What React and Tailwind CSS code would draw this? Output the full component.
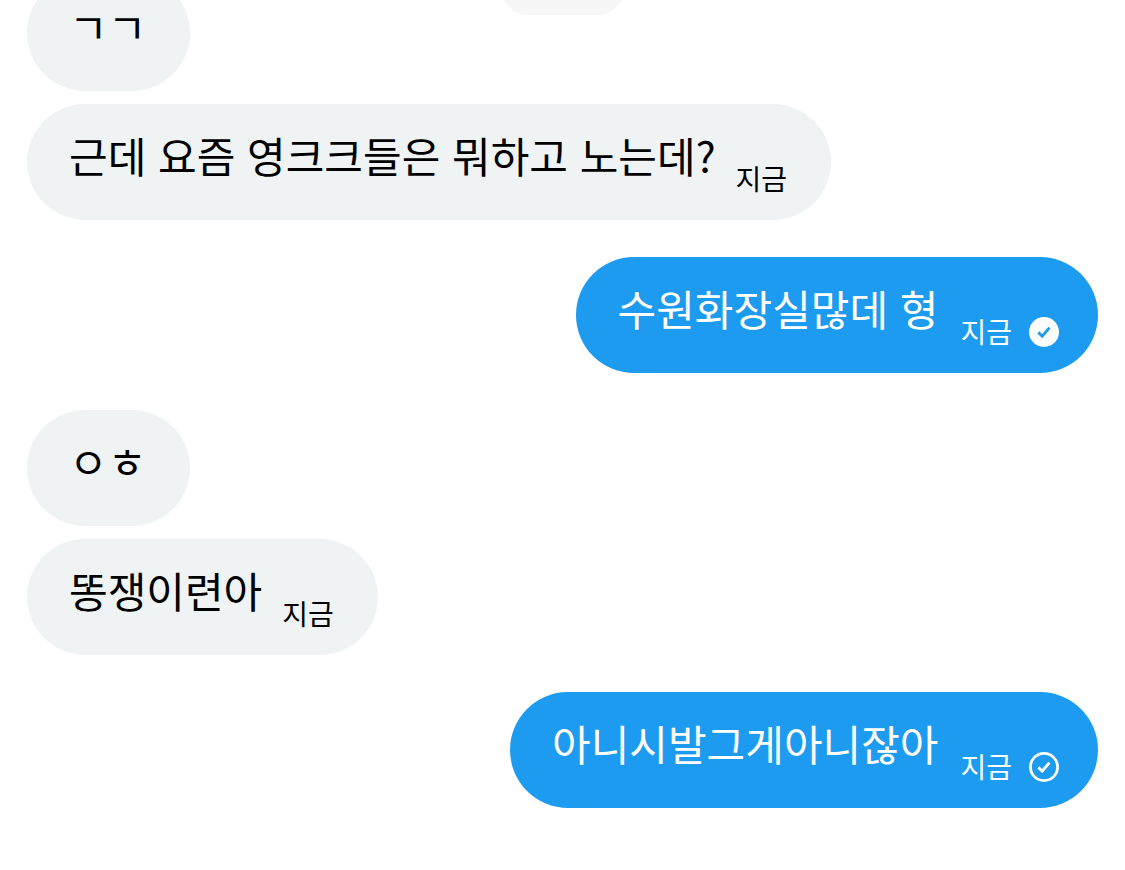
import React from 'react'
import clsx from 'clsx'

const groups = [
    { mine: false, messages: [{ text: 'ㄱㄱ' }, { text: '근데 요즘 영크크들은 뭐하고 노는데?', time: '지금' }] },
    { mine: true, messages: [{ text: '수원화장실많데 형', time: '지금', status: 'read' }] },
    { mine: false, messages: [{ text: 'ㅇㅎ' }, { text: '똥쟁이련아', time: '지금' }] },
    { mine: true, messages: [{ text: '아니시발그게아니잖아', time: '지금', status: 'sent' }] },
]

const StatusIcon = ({ status }) => {
    const read = status === 'read'

    return (
        <svg viewBox="0 0 30 30" fill="none" className="ml-[15px] mt-[34px] size-[30px] shrink-0">
            {read ? (
                <circle cx="15" cy="15" r="15" fill="#fff" />
            ) : (
                <circle cx="15" cy="15" r="13.6" stroke="#fff" strokeWidth="2.8" />
            )}
            <path d="M9.3 15.4L13.2 19.2L20.5 10.6" stroke={read ? '#1d9bf0' : '#fff'} strokeWidth="2.9" />
        </svg>
    )
}

const Bubble = ({ message, mine }) => (
    <div
        className={clsx(
            'flex items-start rounded-full py-[26px] pl-[42px]',
            mine ? 'gap-0.5 bg-[#1d9bf0] pr-[39px] text-white' : 'bg-[#eff3f4] pr-11 text-black'
        )}
    >
        <p className="pb-[14px] text-[42px] leading-[50px]">{message.text}</p>
        {message.time && (
            <time className="ml-5 mt-[33px] shrink-0 text-[28px] leading-[30px]">{message.time}</time>
        )}
        {message.status && <StatusIcon status={message.status} />}
    </div>
)

const App = () => {
    return (
        <main
            lang="ko"
            className="relative overflow-hidden bg-white px-[27px] font-['Noto_Sans_CJK_KR',sans-serif]"
        >
            {/* Date chip, mostly scrolled out of view */}
            <div className="absolute -top-10 left-1/2 h-[55px] w-31 -translate-x-1/2 rounded-full bg-[#f7f7f7]" />

            <div className="relative -mt-[25px] flex flex-col gap-[37px] pb-[62px]">
                {groups.map((group, i) => (
                    <section
                        key={i}
                        className={clsx('flex flex-col gap-[13px]', group.mine ? 'items-end' : 'items-start')}
                    >
                        {group.messages.map((message) => (
                            <Bubble key={message.text} message={message} mine={group.mine} />
                        ))}
                    </section>
                ))}
            </div>
        </main>
    )
}

export default App
